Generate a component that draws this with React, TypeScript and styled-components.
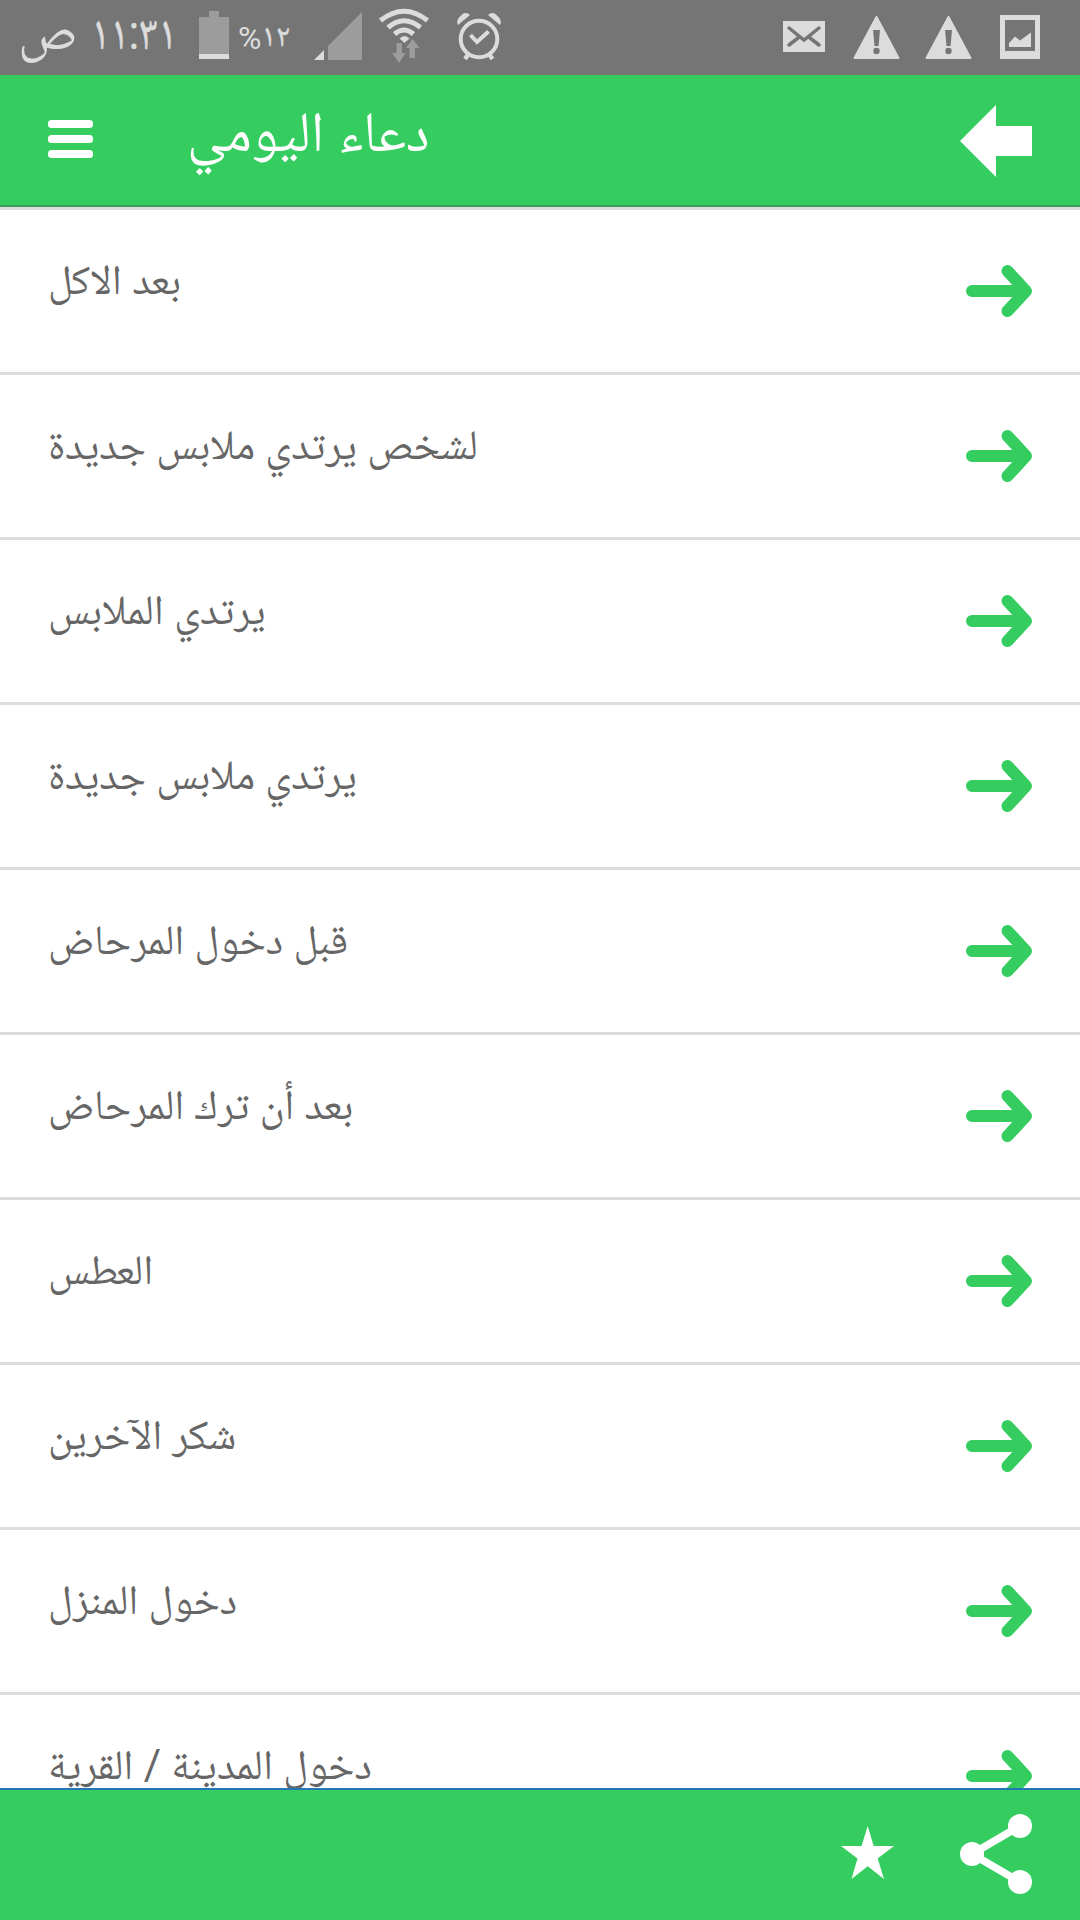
import React from 'react';
import styled, { createGlobalStyle } from 'styled-components';

const GREEN = '#35cd5f';
const LIGHT = '#dcdcdc';
const DIM = '#9c9c9c';

const GlobalStyle = createGlobalStyle`
  * { box-sizing: border-box; }
  body { margin: 0; background: #fff; overflow: hidden; }
`;

const Screen = styled.div`
  width: 1080px;
  height: 1920px;
  display: flex;
  flex-direction: column;
  overflow: hidden;
  background: #fff;
  font-family: Roboto, 'Noto Naskh Arabic', 'Noto Sans Arabic', 'DejaVu Sans', sans-serif;
`;

const StatusBar = styled.header`
  flex: none;
  height: 75px;
  display: flex;
  justify-content: space-between;
  background: #757575;
  color: ${LIGHT};
`;

const StatusGroup = styled.div`
  display: flex;
  align-items: flex-start;
  height: 75px;
`;

const Clock = styled.div`
  width: 157px;
  margin-left: 20px;
  margin-right: 1px;
  display: flex;
  justify-content: space-between;
  white-space: nowrap;
`;

const Time = styled.span`
  font-size: 49px;
  line-height: 65px;
  transform: scaleX(0.86);
  transform-origin: right center;
  -webkit-text-stroke: 0.5px ${LIGHT};
`;

const Period = styled.span`
  font-size: 54px;
  line-height: 62px;
`;

const Percent = styled.div`
  width: 52px;
  height: 75px;
  margin-left: 9px;
  display: flex;
  align-items: flex-start;
  white-space: nowrap;
`;

const PercentSign = styled.span`
  font-size: 32px;
  line-height: 76px;
`;

const PercentValue = styled.span`
  font-size: 32px;
  line-height: 70px;
  -webkit-text-stroke: 0.4px ${LIGHT};
`;

const Glyph = styled.svg<{ $gap?: number }>`
  display: block;
  flex: none;
  margin-left: ${(p) => p.$gap ?? 0}px;
`;

const AppBar = styled.nav`
  flex: 0 0 132px;
  display: flex;
  align-items: flex-start;
  background: ${GREEN};
  border-bottom: 2px solid #3b9f58;
`;

const Title = styled.h1`
  flex: 1;
  margin: 0 0 0 94px;
  font-size: 56.7px;
  font-weight: 400;
  line-height: 114px;
  color: #fff;
  display: flex;
  justify-content: flex-end;
`;

const List = styled.ul`
  flex: 1;
  min-height: 0;
  margin: 0;
  padding: 0;
  list-style: none;
  overflow: hidden;
  border-top: 3px solid #dcdcdc;
`;

const Row = styled.li`
  height: 165px;
  display: flex;
  align-items: flex-start;
  justify-content: space-between;
  padding: 0 48px;
  border-bottom: 3px solid #dcdcdc;
`;

const Label = styled.span`
  font-size: 41.9px;
  line-height: 139px;
  color: #666;
  white-space: nowrap;
`;

const BottomBar = styled.footer`
  flex: 0 0 132px;
  display: flex;
  justify-content: flex-end;
  padding-right: 48px;
  background: ${GREEN};
  border-top: 2px solid #2277b4;
`;

const items = [
  'بعد الاكل',
  'لشخص يرتدي ملابس جديدة',
  'يرتدي الملابس',
  'يرتدي ملابس جديدة',
  'قبل دخول المرحاض',
  'بعد أن ترك المرحاض',
  'العطس',
  'شكر الآخرين',
  'دخول المنزل',
  'دخول المدينة / القرية',
];

const Battery = () => (
  <Glyph $gap={21} width="30" height="75" viewBox="199 0 30 75">
    <path fill={DIM} d="M209 11h10v6h10v37h-30V17h10z" />
    <path fill={LIGHT} d="M199 54h30v5h-30z" />
  </Glyph>
);

const Signal = () => (
  <Glyph $gap={23} width="50" height="75" viewBox="313 0 50 75">
    <path fill={DIM} d="M362 12v48h-34V46z" />
    <path fill={LIGHT} d="M324 50v10h-10z" />
  </Glyph>
);

const Wifi = () => (
  <Glyph $gap={15} width="52" height="75" viewBox="378 0 52 75">
    <g fill="none" stroke={LIGHT} strokeWidth="5">
      <path d="M380.500 20.500Q404 2 427.500 20.500" />
      <path d="M388 27.500Q404 14 420.500 27.500" />
      <path d="M394.500 34Q404 26 413.500 34" />
    </g>
    <path fill={LIGHT} d="M399.500 38.500q5-5 10 0l-5 4.500z" />
    <path fill={DIM} d="M396.500 43h5.500v10h3.500l-6.500 10-7-10h4.500zM409.500 58V48H406l6.500-9 7 9H415v10z" />
  </Glyph>
);

const Alarm = () => (
  <Glyph $gap={26} width="46" height="75" viewBox="456 0 46 75">
    <circle cx="479" cy="39" r="18.300" fill="none" stroke={LIGHT} strokeWidth="4" />
    <path d="m470.500 35 6.500 7 11.500-10.500" fill="none" stroke={LIGHT} strokeWidth="4" />
    <path d="m468.500 54-3.500 5m24-5 3.500 5" fill="none" stroke={LIGHT} strokeWidth="4.500" />
    <path fill={LIGHT} d="M458 25q-2-4 1-7.500l3-3q4-3 8 .5zM500 25q2-4-1-7.500l-3-3q-4-3-8 .5z" />
  </Glyph>
);

const Mail = () => (
  <Glyph width="42" height="75" viewBox="783 0 42 75">
    <path fill={LIGHT} d="M783 21h42v31h-42z" />
    <path d="m789 28 15 12 15-12M789 45l9-7M819 45l-9-7" fill="none" stroke="#757575" strokeWidth="3.500" strokeLinecap="round" />
  </Glyph>
);

const Warning = ({ gap }: { gap: number }) => (
  <Glyph $gap={gap} width="48" height="75" viewBox="0 0 48 75">
    <path fill={LIGHT} stroke={LIGHT} strokeWidth="2" strokeLinejoin="round" d="M24.500 17 46.500 58h-44z" />
    <path fill="#757575" d="M21 30h7l-1.500 16h-4z" />
    <circle cx="24.500" cy="51" r="3.200" fill="#757575" />
  </Glyph>
);

const Picture = () => (
  <Glyph $gap={28} width="40" height="75" viewBox="1000 0 40 75">
    <path fill={LIGHT} fillRule="evenodd" d="M1000 15h40v44h-40zM1005 20v31h30V20z" />
    <path fill={LIGHT} d="M1009 47v-4l6-6.500 5 4 11-8V47z" />
  </Glyph>
);

const Menu = () => (
  <Glyph $gap={48} width="45" height="130" viewBox="48 75 45 130">
    <g fill="#fff">
      <rect x="48" y="120" width="45" height="8" rx="3.500" />
      <rect x="48" y="135" width="45" height="8" rx="3.500" />
      <rect x="48" y="150" width="45" height="8" rx="3.500" />
    </g>
  </Glyph>
);

const Back = () => (
  <Glyph width="120" height="130" viewBox="960 75 120 130">
    <path fill="#fff" d="M960 141l36-36v21h36v30h-36v21z" />
  </Glyph>
);

const Arrow = () => (
  <Glyph width="66" height="162" viewBox="966 210 66 162">
    <path d="M972 291h51M1007.500 271l18.500 20-18.500 20" fill="none" stroke={GREEN} strokeWidth="12" strokeLinecap="round" strokeLinejoin="round" />
  </Glyph>
);

const Star = () => (
  <Glyph width="54" height="130" viewBox="841 1790 54 130">
    <path fill="#fff" d="M867.700 1826l6 20h20.300l-16.300 12.500 6.300 20.500-16.300-12.700-16.200 12.700 6-20.500L841 1846h20.500z" />
  </Glyph>
);

const Share = () => (
  <Glyph $gap={65} width="72" height="130" viewBox="960 1790 72 130">
    <path d="m1020 1826-48 28 48 28" fill="none" stroke="#fff" strokeWidth="7.500" />
    <g fill="#fff">
      <circle cx="1020" cy="1826" r="12" />
      <circle cx="972" cy="1854" r="12" />
      <circle cx="1020" cy="1882" r="12" />
    </g>
  </Glyph>
);

export default function App() {
  return (
    <Screen>
      <GlobalStyle />
      <StatusBar>
        <StatusGroup>
          <Clock dir="rtl">
            <Time>١١:٣١</Time>
            <Period>ص</Period>
          </Clock>
          <Battery />
          <Percent>
            <PercentSign>%</PercentSign>
            <PercentValue>١٢</PercentValue>
          </Percent>
          <Signal />
          <Wifi />
          <Alarm />
        </StatusGroup>
        <StatusGroup>
          <Mail />
          <Warning gap={27} />
          <Warning gap={24} />
          <Picture />
          <Glyph width="40" height="75" />
        </StatusGroup>
      </StatusBar>
      <AppBar>
        <Menu />
        <Title dir="rtl">دعاء اليومي</Title>
        <Back />
      </AppBar>
      <List>
        {items.map((text) => (
          <Row key={text}>
            <Label dir="rtl">{text}</Label>
            <Arrow />
          </Row>
        ))}
      </List>
      <BottomBar>
        <Star />
        <Share />
      </BottomBar>
    </Screen>
  );
}
